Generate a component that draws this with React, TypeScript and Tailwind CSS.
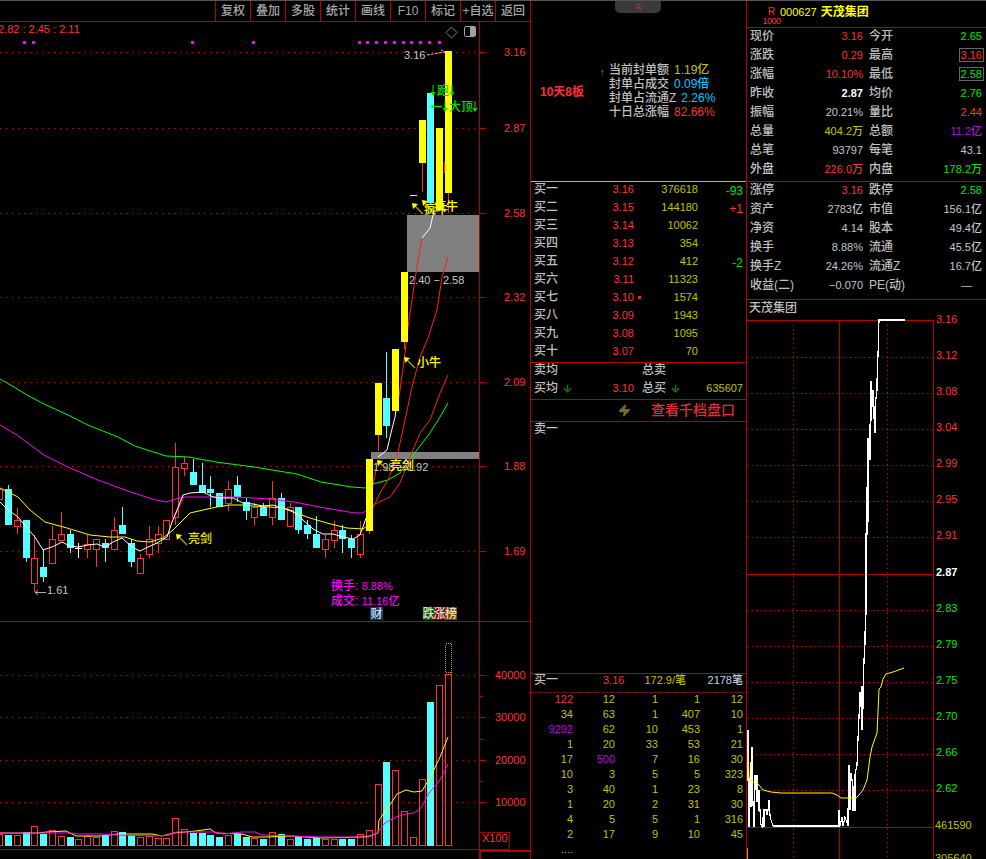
import React from 'react';
import { ArrowDown, ChevronsUp, Zap } from 'lucide-react';

const RED = '#ff3232';
const LINE = '#b80000';
const DOT = '#c80000';
const CYAN = '#54ffff';
const YELLOW = '#ffff00';
const MAGENTA = '#ff00ff';
const GREEN = '#00ff00';

type Candle = [number, number, number, number, 'r' | 'c' | 'y'];

// index 0 is the partial candle on the left edge: [bodyTop, bodyBottom, wickTop, wickBottom, kind]
const candles: Candle[] = [
  [489, 499, 489, 499, 'r'],
  [489, 525, 485, 525, 'c'],
  [520, 526, 508, 534, 'r'],
  [520, 558, 520, 562, 'c'],
  [558, 583, 535, 592, 'r'],
  [567, 577, 550, 582, 'c'],
  [539, 563, 526, 563, 'r'],
  [534, 540, 512, 540, 'r'],
  [534, 548, 530, 553, 'c'],
  [548, 548, 543, 558, 'y'],
  [544, 549, 535, 558, 'r'],
  [539, 549, 539, 567, 'r'],
  [543, 548, 539, 562, 'c'],
  [530, 549, 517, 549, 'r'],
  [525, 534, 507, 534, 'c'],
  [543, 562, 539, 567, 'c'],
  [558, 573, 554, 573, 'r'],
  [539, 554, 526, 558, 'r'],
  [534, 543, 526, 553, 'r'],
  [520, 539, 520, 539, 'r'],
  [467, 517, 443, 525, 'r'],
  [463, 468, 457, 476, 'r'],
  [472, 485, 459, 485, 'c'],
  [485, 493, 463, 493, 'c'],
  [489, 493, 476, 507, 'c'],
  [493, 507, 493, 507, 'c'],
  [489, 503, 481, 511, 'r'],
  [485, 497, 476, 502, 'c'],
  [502, 511, 498, 520, 'c'],
  [507, 517, 503, 525, 'r'],
  [507, 516, 503, 516, 'c'],
  [498, 517, 481, 525, 'r'],
  [498, 520, 493, 520, 'c'],
  [507, 526, 503, 526, 'r'],
  [507, 530, 507, 534, 'c'],
  [525, 534, 520, 539, 'c'],
  [534, 548, 516, 548, 'c'],
  [539, 549, 535, 558, 'r'],
  [530, 540, 521, 548, 'r'],
  [530, 539, 525, 553, 'c'],
  [539, 548, 535, 558, 'c'],
  [534, 554, 521, 558, 'r'],
  [459, 531, 459, 534, 'y'],
  [383, 435, 383, 451, 'y'],
  [398, 426, 352, 438, 'c'],
  [349, 411, 349, 411, 'y'],
  [272, 342, 272, 349, 'y'],
  [195, 196, 195, 196, 'y'],
  [120, 163, 120, 192, 'y'],
  [93, 203, 93, 203, 'c'],
  [128, 210, 128, 210, 'y'],
  [51, 193, 51, 213, 'y'],
];

const volumes = [
  11.7, 10.7, 11.3, 13.7, 20.3, 12, 16.3, 10.3, 8.7, 7.3, 10, 9, 9.7, 15.3, 13.7, 11.3, 9.3,
  10.3, 8.3, 7.7, 28.3, 17.3, 13.3, 13.3, 10.7, 8.7, 11.3, 11.7, 8.7, 8.3, 6.7, 14.3, 11.7,
  7.3, 9, 6.7, 8.3, 7, 7, 7, 7, 12.3, 16.3, 62.3, 83.7, 76.3, 35.3, 9, 67.3, 143.7, 161.3, 172.3,
];

const candleX = (i: number) => Math.floor(8.5 + 8.8 * (i - 1)) + 0.5;

const priceAxis: [string, number][] = [
  ['3.16', 52],
  ['2.87', 128],
  ['2.58', 213],
  ['2.32', 297],
  ['2.09', 382],
  ['1.88', 466],
  ['1.69', 551],
];

const volumeAxis: [string, number][] = [
  ['40000', 675],
  ['30000', 717],
  ['20000', 760],
  ['10000', 802],
];

const markers = [24, 33, 192, 253, 359, 367, 376, 385, 394, 403, 411, 420, 429, 439];

const ma5 =
  '0,502 7,509 18,517 27,528 35,537 43,550 52,547 62,542 70,546 78,547 88,545 97,544 105,547 113,542 122,538 132,547 140,551 148,547 157,543 167,537 172,522 177,510 183,495 190,493 203,492 213,497 223,498 233,498 243,503 253,504 263,506 273,505 283,508 293,511 303,520 313,529 323,534 333,534 343,537 353,539 360,535 363,527 366,518';
const ma5Mid = '378,457 387,450 390,437 395,417 398,397';
const ma5Red = '372,490 378,460';
const ma5Up = '399,397 405,353 408,327 413,293 418,260 422,238';
const ma5Top = '422,238 430,228 433,215 434,210';
const ma10 =
  '0,488 18,497 30,510 45,522 67,528 90,535 110,537 125,537 137,541 150,542 163,538 173,530 180,523 190,513 203,510 217,507 230,505 243,505 253,506 270,507 283,508 293,512 310,518 327,523 347,528 363,529 367,526';
const ma10Up = '372,510 380,493 388,480 397,457 405,420 412,387 420,357 428,338 437,310 442,277 448,257';
const ma20 =
  '0,425 17,435 44,455 68,467 98,480 125,490 152,499 166,502 183,497 210,497 237,497 270,499 294,502 325,508 355,513 363,513 367,510';
const ma20Up = '373,505 390,497 400,483 410,457 420,433 430,420 440,393 448,375';
const ma60 =
  '0,379 14,387 27,395 42,403 68,415 88,425 118,437 135,446 166,456 189,457 216,462 254,467 297,474 321,482 352,487 365,488 373,484 388,480 400,473 413,455 430,433 440,417 448,403';

const volYellow =
  '0,833 37,833 47,832 66,831 76,836 91,836 101,836 118,834 152,834 162,836 174,833 196,831 210,829 216,833 242,834 252,837 267,837 291,836 321,838 362,837 370,836 378,833 379,820 392,802 397,794 406,790 414,792 422,791 431,776 440,757 448,737';
const volMagenta =
  '0,833 44,833 73,833 78,834 101,834 118,835 156,836 169,835 176,832 216,832 223,834 242,832 255,832 262,835 291,836 321,837 355,837 369,837 377,833 385,823 396,817 406,814 414,813 421,808 429,793 440,780 448,764';

const intradayPrice =
  '748,730 748,780 749,780 749,827 750,780 751,762 751,807 752,747 752,780 754,827 755,775 757,802 757,775 758,797 759,790 759,810 760,810 761,825 762,827 763,817 764,827 764,810 766,810 767,815 768,810 769,800 770,815 771,820 773,826 839,826 839,810 840,826 842,817 843,826 845,817 848,826 848,813 849,765 850,810 851,773 853,787 853,810 855,810 855,775 857,765 858,739 859,717 860,692 860,707 862,686 862,730 863,707 864,660 865,643 865,633 866,613 866,534 867,534 867,487 868,522 868,438 869,443 870,460 870,425 871,420 871,381 872,407 873,390 874,417 875,433 875,407 877,390 877,381 878,355 879,320 905,320';
const intradayAvg =
  '748,753 749,777 751,782 756,782 759,785 763,790 771,792 781,793 832,793 837,795 841,798 856,798 859,795 863,790 867,780 869,765 870,757 872,747 877,733 878,712 879,689 881,687 883,679 886,674 893,672 904,668';

const intradayAxis: [string, number, string][] = [
  ['3.12', 357, RED],
  ['3.08', 393, RED],
  ['3.04', 429, RED],
  ['2.99', 465, RED],
  ['2.95', 501, RED],
  ['2.91', 537, RED],
  ['2.83', 610, '#00e800'],
  ['2.79', 646, '#00e800'],
  ['2.75', 682, '#00e800'],
  ['2.70', 718, '#00e800'],
  ['2.66', 754, '#00e800'],
  ['2.62', 790, '#00e800'],
];

function Pointer({ x, y }: { x: number; y: number }) {
  return (
    <g>
      <line x1={x + 2} y1={y + 2} x2={x + 11} y2={y + 11} stroke="#a8a800" strokeWidth="1.2" />
      <polygon points={`${x},${y} ${x + 6},${y + 1} ${x + 1},${y + 6}`} fill={YELLOW} />
    </g>
  );
}

function GreenDown({ x, y }: { x: number; y: number }) {
  return (
    <g>
      <line x1={x} y1={y - 5} x2={x} y2={y + 3} stroke="#00e000" strokeWidth="1" />
      <polygon points={`${x - 2.5},${y + 2} ${x + 2.5},${y + 2} ${x},${y + 6}`} fill="#00e000" />
    </g>
  );
}

function PriceChart() {
  return (
    <svg width="530" height="837" viewBox="0 22 530 837" className="block">
      <text x="-2" y="33" fontSize="11" fill={RED}>
        2.82 : 2.45 : 2.11
      </text>
      {markers.map((x) => (
        <rect key={x} x={x - 1} y={41} width="3" height="3" fill={MAGENTA} />
      ))}
      <polygon points="451.5,27 457,32.5 451.5,38 446,32.5" fill="none" stroke="#808080" />
      <rect x="464.5" y="26.5" width="11" height="10" rx="1.5" fill="none" stroke="#a0a0a0" />
      <rect x="470" y="27" width="5" height="9" fill="#a0a0a0" />

      {priceAxis.map(([label, y]) => (
        <g key={label}>
          <line x1="0" y1={y + 0.5} x2="476" y2={y + 0.5} stroke={DOT} strokeDasharray="1.5 4.5" />
          <line x1="480" y1={y + 0.5} x2="486" y2={y + 0.5} stroke={LINE} />
          <text x="504" y={y + 4} fontSize="11" fill={RED}>
            {label}
          </text>
        </g>
      ))}

      {/* limit-up zones */}
      <rect x="407" y="215" width="72" height="57" fill="#808080" />
      <rect x="371" y="452" width="108" height="7" fill="#808080" />
      <text x="409" y="284" fontSize="11" fill="#c8c8c8">
        2.40 − 2.58
      </text>

      <Candles from={0} to={41} />

      <g fill="none" strokeWidth="1">
        <polyline points={ma60} stroke={GREEN} />
        <polyline points={ma20} stroke={MAGENTA} />
        <polyline points={ma20Up} stroke="#ff2020" />
        <polyline points={ma10} stroke={YELLOW} />
        <polyline points="172,522 184,497" stroke="#ff2020" />
        <polyline points={ma10Up} stroke="#ff2020" />
        <polyline points={ma5} stroke="#ffffff" />
        <polyline points={ma5Red} stroke="#ff2020" />
        <polyline points={ma5Mid} stroke="#ffffff" />
        <polyline points={ma5Up} stroke="#ff2020" />
        <polyline points={ma5Top} stroke="#ffffff" />
      </g>

      <Candles from={42} to={51} />
      <line x1="444.5" y1="162" x2="444.5" y2="173" stroke="#ff2020" />

      {/* annotations over the candles */}
      <text x="404" y="59" fontSize="11" fill="#c0c8d0">
        3.16
      </text>
      <polyline points="427,55 445,52 441,50" fill="none" stroke="#c8c8c8" strokeDasharray="3 1" />
      <GreenDown x={433} y={90} />
      <text x="437" y="95" fontSize="12" fill="#00e000">
        跑
      </text>
      <GreenDown x={452} y={90} />
      <line x1="431" y1="106.5" x2="442" y2="106.5" stroke="#00e000" strokeWidth="1.5" />
      <GreenDown x={445} y={106} />
      <text x="449" y="111" fontSize="12" fill="#00e000">
        大顶
      </text>
      <GreenDown x={475} y={106} />

      <Pointer x={412} y={203} />
      <Pointer x={422} y={200} />
      <text x="424" y="214" fontSize="12" fill={YELLOW}>
        疯牛
      </text>
      <text x="434" y="211" fontSize="12" fill={YELLOW}>
        疯牛
      </text>
      <Pointer x={404} y={357} />
      <text x="417" y="367" fontSize="12" fill={YELLOW}>
        小牛
      </text>
      <Pointer x={176} y={534} />
      <text x="188" y="543" fontSize="12" fill="#e8e800">
        亮剑
      </text>
      <text x="373" y="471" fontSize="11" fill="#c8c8c8">
        1.98 − 1.92
      </text>
      <Pointer x={377} y={460} />
      <text x="390" y="470" fontSize="12" fill={YELLOW}>
        亮剑
      </text>
      <line x1="35" y1="592.5" x2="46" y2="592.5" stroke="#b0b0b0" />
      <polyline points="38,590 35,592.5 38,595" fill="none" stroke="#b0b0b0" />
      <text x="47" y="594" fontSize="11" fill="#c0c8d0">
        1.61
      </text>

      <text x="331" y="590" fontSize="12" fill={MAGENTA}>
        换手: <tspan fontSize="11">8.88%</tspan>
      </text>
      <text x="331" y="605" fontSize="12" fill={MAGENTA}>
        成交: <tspan fontSize="11">11.16亿</tspan>
      </text>

      <rect x="370" y="607" width="13" height="13" fill="#143c6e" />
      <text x="370.5" y="618" fontSize="12" fill="#d8e0f0">
        财
      </text>
      <rect x="423" y="607" width="11" height="13" fill="#006000" />
      <rect x="434" y="607" width="11" height="13" fill="#800000" />
      <rect x="445" y="607" width="12" height="13" fill="#804000" />
      <text x="422.5" y="618" fontSize="12" fill="#e0e0e0">
        跌
      </text>
      <text x="433.5" y="618" fontSize="12" fill="#e0e0e0">
        涨
      </text>
      <text x="445" y="618" fontSize="12" fill="#e0e0e0">
        榜
      </text>

      <VolumePanel />

      <line x1="479.5" y1="22" x2="479.5" y2="859" stroke={LINE} />
    </svg>
  );
}

function Candles({ from, to }: { from: number; to: number }) {
  return (
    <g shapeRendering="crispEdges">
      {candles.map(([top, bottom, wickTop, wickBottom, kind], i) => {
        if (i < from || i > to) return null;
        const x = candleX(i);
        if (i === 9) {
          return (
            <g key={i}>
              <line x1={x} y1={wickTop} x2={x} y2={wickBottom} stroke="#ffffff" />
              <line x1={x - 3.5} y1={top + 0.5} x2={x + 3.5} y2={top + 0.5} stroke="#ffffff" />
            </g>
          );
        }
        if (i === 47) {
          return <rect key={i} x={x - 3.5} y={top} width="7" height="1" fill={YELLOW} />;
        }
        const wick = kind === 'c' ? CYAN : RED;
        return (
          <g key={i}>
            <line x1={x} y1={wickTop} x2={x} y2={wickBottom} stroke={wick} />
            {kind === 'r' ? (
              <rect x={x - 3} y={top + 0.5} width="6" height={bottom - top} fill="#000" stroke={RED} />
            ) : (
              <rect x={x - 3.5} y={top} width="7" height={bottom - top} fill={kind === 'c' ? CYAN : YELLOW} />
            )}
          </g>
        );
      })}
    </g>
  );
}

function VolumePanel() {
  return (
    <g>
      <line x1="0" y1="621.5" x2="530" y2="621.5" stroke={LINE} />
      {volumeAxis.map(([label, y]) => (
        <g key={label}>
          <line x1="0" y1={y + 0.5} x2="476" y2={y + 0.5} stroke={DOT} strokeDasharray="1.5 4.5" />
          <line x1="480" y1={y + 0.5} x2="486" y2={y + 0.5} stroke={LINE} />
          <text x="495" y={y + 4} fontSize="11" fill={RED}>
            {label}
          </text>
        </g>
      ))}
      {[696, 739, 781].map((y) => (
        <line key={y} x1="480" y1={y + 0.5} x2="483" y2={y + 0.5} stroke={LINE} />
      ))}
      <g shapeRendering="crispEdges">
        {volumes.map((h, i) => {
          const x = candleX(i);
          const top = Math.round(846 - h);
          const isCyan = candles[i][4] === 'c';
          return isCyan ? (
            <rect key={i} x={x - 3.5} y={top} width="7" height={846 - top} fill={CYAN} />
          ) : (
            <rect key={i} x={x - 3} y={top + 0.5} width="6" height={845 - top} fill="#000" stroke={RED} />
          );
        })}
        <rect
          x={candleX(51) - 3}
          y="643.5"
          width="6"
          height="29"
          fill="none"
          stroke="#b8b800"
          strokeDasharray="1 1"
        />
      </g>
      <polyline points={volYellow} fill="none" stroke={YELLOW} />
      <polyline points={volMagenta} fill="none" stroke={MAGENTA} />
      <line x1="0" y1="849.5" x2="479" y2="849.5" stroke={LINE} />
      <rect x="479.5" y="832.5" width="30" height="17" fill="none" stroke="#a00000" />
      <text x="482" y="842" fontSize="11" fill={RED}>
        X100
      </text>
      <polyline points="480,859 480,851 530,851" fill="none" stroke={LINE} strokeWidth="2" />
    </g>
  );
}

const bids: [string, string, string, string, string][] = [
  ['买一', '3.16', '376618', '-93', 'text-[#00e000]'],
  ['买二', '3.15', '144180', '+1', 'text-[#ff3232]'],
  ['买三', '3.14', '10062', '', ''],
  ['买四', '3.13', '354', '', ''],
  ['买五', '3.12', '412', '-2', 'text-[#00e000]'],
  ['买六', '3.11', '11323', '', ''],
  ['买七', '3.10', '1574', '', ''],
  ['买八', '3.09', '1943', '', ''],
  ['买九', '3.08', '1095', '', ''],
  ['买十', '3.07', '70', '', ''],
];

const ticks: [string, string, string, string, string][] = [
  ['122', '12', '1', '1', '12'],
  ['34', '63', '1', '407', '10'],
  ['9292', '62', '10', '453', '1'],
  ['1', '20', '33', '53', '21'],
  ['17', '500', '7', '16', '30'],
  ['10', '3', '5', '5', '323'],
  ['3', '40', '1', '23', '8'],
  ['1', '20', '2', '31', '30'],
  ['4', '5', '5', '1', '316'],
  ['2', '17', '9', '10', '45'],
];

function tickColor(v: string) {
  if (v === '122') return 'text-[#ff3232]';
  if (v === '9292' || v === '500') return 'text-[#c000e0]';
  return 'text-[#c0c000]';
}

function OrderBook() {
  return (
    <div className="w-[216px] shrink-0 border-l border-[#b80000] text-[#c0c0c0]">
      <div className="relative flex h-[181px] items-center border-b border-[#e0a860] pl-[9px]">
        <div className="absolute left-[84px] top-0 flex h-[12px] w-[46px] justify-center rounded-b-[5px] bg-[#3a3a3a]">
          <ChevronsUp size={11} color="#e04040" />
        </div>
        <div className="mt-[2px] w-[60px] text-[12px] font-bold text-[#ff3232]">10天8板</div>
        <div className="h-[46px] w-[9px] text-[9px] leading-[8px] text-[#a0a0a0]">↑</div>
        <div className="text-[12px] leading-[14px]">
          <p>
            当前封单额<span className="ml-[5px] text-[#c0c000]">1.19亿</span>
          </p>
          <p>
            封单占成交<span className="ml-[5px] text-[#00c8ff]">0.09倍</span>
          </p>
          <p>
            封单占流通Z<span className="ml-[5px] text-[#00c8ff]">2.26%</span>
          </p>
          <p>
            十日总涨幅<span className="ml-[5px] text-[#ff3232]">82.66%</span>
          </p>
        </div>
      </div>

      <div className="-mt-[2px] mb-[2px] pl-[3px]">
        {bids.map(([name, price, qty, change, changeColor]) => (
          <div key={name} className="grid h-[18px] grid-cols-[29px_71px_64px_45px] items-center text-[11px] leading-[14px]">
            <span className="text-[12px]">{name}</span>
            <span className="text-right text-[#ff3232]">{price}</span>
            <span className="relative text-right text-[#c0c000]">
              {price === '3.10' && <span className="absolute left-[4px] top-[6px] h-[3px] w-[3px] bg-[#ff2020]" />}
              {qty}
            </span>
            <span className={`pt-[3px] text-right text-[12px] ${changeColor}`}>{change}</span>
          </div>
        ))}
      </div>

      <div className="h-[38px] border-y border-[#b80000] pl-[3px]">
        <div className="-mt-[2px] flex h-[18px] items-center text-[12px]">
          <span className="w-[108px]">卖均</span>
          <span>总卖</span>
        </div>
        <div className="grid h-[18px] grid-cols-[100px_8px_101px] items-center text-[12px]">
          <span className="flex items-center">
            买均
            <ArrowDown size={11} strokeWidth={3} color="#008000" className="ml-[4px]" />
            <span className="ml-auto text-[11px] text-[#ff3232]">3.10</span>
          </span>
          <span />
          <span className="flex items-center">
            总买
            <ArrowDown size={11} strokeWidth={3} color="#008000" className="ml-[4px]" />
            <span className="ml-auto text-[11px] text-[#c0c000]">635607</span>
          </span>
        </div>
      </div>

      <div className="flex h-[22px] items-center border-b border-[#b80000] pl-[87px]">
        <Zap size={13} fill="#7a6a2a" stroke="#7a6a2a" />
        <span className="ml-[20px] text-[14px] text-[#e03030]">查看千档盘口</span>
      </div>

      <div className="h-[252px] border-b border-[#b80000] pl-[3px] text-[12px] leading-[14px]">卖一</div>

      <div className="h-[19px] border-b border-dotted border-[#c80000] pl-[3px] text-[11px] leading-[13px]">
        <div className="grid grid-cols-[100px_52px_57px]">
          <span className="relative text-[12px]">
            买一
            <span className="absolute left-[69px] top-0 text-[11px] text-[#ff3232]">3.16</span>
          </span>
          <span className="text-right text-[#c0c000]">172.9/笔</span>
          <span className="text-right text-[#c8d0e0]">2178笔</span>
        </div>
      </div>
      <div className="-mt-[2px] text-[11px]">
        {ticks.map((row, r) => (
          <div key={r} className="grid h-[15px] grid-cols-[42px_42px_43px_42px_43px] items-center text-right">
            {row.map((v, c) => (
              <span key={c} className={tickColor(v)}>
                {v}
              </span>
            ))}
          </div>
        ))}
        <div className="w-[42px] text-right leading-[17px] text-[#c0c000]">....</div>
      </div>
    </div>
  );
}

type Stat = [string, string, string];

const quoteRows: [Stat, Stat][] = [
  [['现价', '3.16', 'text-[#ff3232]'], ['今开', '2.65', 'text-[#00e800]']],
  [['涨跌', '0.29', 'text-[#ff3232]'], ['最高', '3.16', 'text-[#ff3232]']],
  [['涨幅', '10.10%', 'text-[#ff3232]'], ['最低', '2.58', 'text-[#00e800]']],
  [['昨收', '2.87', 'text-white font-bold'], ['均价', '2.76', 'text-[#00e800]']],
  [['振幅', '20.21%', 'text-[#c0c8d0]'], ['量比', '2.44', 'text-[#ff3232]']],
  [['总量', '404.2万', 'text-[#c0c000]'], ['总额', '11.2亿', 'text-[#b010e0]']],
  [['总笔', '93797', 'text-[#c0c8d0]'], ['每笔', '43.1', 'text-[#c0c8d0]']],
  [['外盘', '226.0万', 'text-[#ff3232]'], ['内盘', '178.2万', 'text-[#00e800]']],
];

const financeRows: [Stat, Stat][] = [
  [['涨停', '3.16', 'text-[#ff3232]'], ['跌停', '2.58', 'text-[#00e800]']],
  [['资产', '2783亿', 'text-[#c0c8d0]'], ['市值', '156.1亿', 'text-[#c0c8d0]']],
  [['净资', '4.14', 'text-[#c0c8d0]'], ['股本', '49.4亿', 'text-[#c0c8d0]']],
  [['换手', '8.88%', 'text-[#c0c8d0]'], ['流通', '45.5亿', 'text-[#c0c8d0]']],
  [['换手Z', '24.26%', 'text-[#c0c8d0]'], ['流通Z', '16.7亿', 'text-[#c0c8d0]']],
  [['收益(二)', '−0.070', 'text-[#c0c8d0]'], ['PE(动)', '—', 'text-[#c0c8d0] pr-[10px]']],
];

function StatCell({ stat, boxed }: { stat: Stat; boxed?: boolean }) {
  const [label, value, color] = stat;
  return (
    <div className="flex w-[113px] items-center justify-between">
      <span className="text-[12px]">{label}</span>
      <span
        className={`text-[11px] leading-[12px] ${color} ${
          boxed ? 'relative after:absolute after:-inset-x-[2px] after:-inset-y-[1px] after:border after:border-[#666]' : ''
        }`}
      >
        {value}
      </span>
    </div>
  );
}

function StatRows({ rows }: { rows: [Stat, Stat][] }) {
  return (
    <div className="-mt-[2px]">
      {rows.map(([left, right]) => (
        <div key={left[0]} className="flex h-[19px] items-center gap-[6px] pl-[3px]">
          <StatCell stat={left} />
          <StatCell stat={right} boxed={right[0] === '最高' || right[0] === '最低'} />
        </div>
      ))}
    </div>
  );
}

function IntradayChart() {
  return (
    <svg width="239" height="539" viewBox="747 320 239 539" className="block overflow-visible">
      <g stroke={DOT}>
        {intradayAxis.map(([label, y]) => (
          <line key={label} x1="747" y1={y + 0.5} x2="933" y2={y + 0.5} strokeDasharray="1.5 3" />
        ))}
        <line x1="793.5" y1="320" x2="793.5" y2="859" strokeDasharray="1.5 3" />
        <line x1="887.5" y1="320" x2="887.5" y2="859" strokeDasharray="1.5 3" />
      </g>
      <g stroke={LINE}>
        <line x1="747" y1="320.5" x2="933" y2="320.5" />
        <line x1="747" y1="574.5" x2="933" y2="574.5" />
        <line x1="747" y1="827.5" x2="933" y2="827.5" />
        <line x1="839.5" y1="320" x2="839.5" y2="859" />
        <line x1="933.5" y1="320" x2="933.5" y2="859" />
      </g>
      <polyline points={intradayPrice} fill="none" stroke="#ffffff" strokeWidth="1.2" shapeRendering="crispEdges" />
      <polyline points={intradayAvg} fill="none" stroke={YELLOW} />
      <rect x="747" y="848" width="1" height="11" fill="#c0a000" />

      <text x="936" y="323" fontSize="11" fill={RED}>
        3.16
      </text>
      {intradayAxis.map(([label, y, color]) => (
        <text key={label} x="936" y={y + 2} fontSize="11" fill={color}>
          {label}
        </text>
      ))}
      <text x="936" y="576" fontSize="11" fontWeight="bold" fill="#ffffff">
        2.87
      </text>
      <text x="935" y="829" fontSize="11" fill="#c0c000">
        461590
      </text>
      <text x="935" y="862" fontSize="11" fill="#c0c000">
        305640
      </text>
    </svg>
  );
}

function QuotePanel() {
  return (
    <div className="w-[240px] shrink-0 border-l border-[#b80000] text-[#c0c0c0]">
      <div className="flex h-[27px] border-b border-[#b80000] pl-[16px]">
        <div className="flex w-[17px] flex-col items-center pt-[6px] text-[#ff3232]">
          <span className="text-[10px] leading-[9px]">R</span>
          <span className="text-[9px] leading-[10px] tracking-[-0.5px]">1000</span>
        </div>
        <div className="flex items-start gap-[4px] pt-[4px] text-[#ffff00]">
          <span className="text-[11px] leading-[14px]">000627</span>
          <span className="text-[12px] font-bold leading-[14px]">天茂集团</span>
        </div>
      </div>
      <div className="flow-root h-[154px] border-b border-[#b80000]">
        <StatRows rows={quoteRows} />
      </div>
      <div className="flow-root h-[118px] border-b border-[#b80000]">
        <StatRows rows={financeRows} />
      </div>
      <div className="h-[20px] pl-[2px] text-[12px] leading-[16px]">天茂集团</div>
      <IntradayChart />
    </div>
  );
}

const toolbar = ['复权', '叠加', '多股', '统计', '画线', 'F10', '标记', '+自选', '返回'];

export default function App() {
  return (
    <div className="flex h-[859px] w-[986px] overflow-hidden border-t border-[#555] bg-black font-medium font-['Liberation_Sans','Noto_Sans_CJK_SC',sans-serif]">
      <div className="w-[530px] shrink-0">
        <div className="flex h-[21px] justify-end border-b border-[#b80000]">
          {toolbar.map((item) => (
            <div
              key={item}
              className="flex w-[35px] items-center justify-center border-l border-[#b80000] text-[12px] text-[#a8a8a8]"
            >
              {item}
            </div>
          ))}
        </div>
        <PriceChart />
      </div>
      <OrderBook />
      <QuotePanel />
    </div>
  );
}
